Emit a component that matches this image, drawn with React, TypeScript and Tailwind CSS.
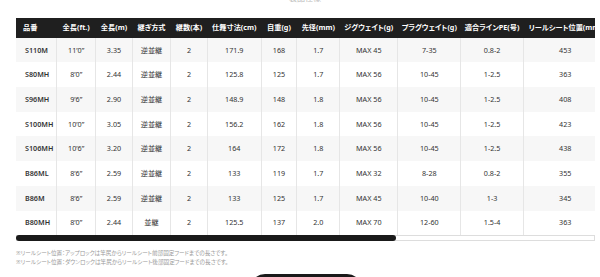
import * as React from "react"

const columns = [
    { label: "品番", width: "w-[40.7px]" },
    { label: "全長(ft.)", width: "w-[39px]" },
    { label: "全長(m)", width: "w-[36.6px]" },
    { label: "継ぎ方式", width: "w-[38.4px]" },
    { label: "継数(本)", width: "w-[36.6px]" },
    { label: "仕舞寸法(cm)", width: "w-[54px]" },
    { label: "自重(g)", width: "w-[35.4px]" },
    { label: "先径(mm)", width: "w-[43.3px]" },
    { label: "ジグウェイト(g)", width: "w-[57.7px]" },
    { label: "プラグウェイト(g)", width: "w-[63.3px]" },
    { label: "適合ラインPE(号)", width: "w-[62.3px]" },
    { label: "リールシート位置(mm)", width: "w-[84px]" },
]

const rows = [
    ["S110M", "11’0”", "3.35", "逆並継", "2", "171.9", "168", "1.7", "MAX 45", "7-35", "0.8-2", "453"],
    ["S80MH", "8’0”", "2.44", "逆並継", "2", "125.8", "125", "1.7", "MAX 56", "10-45", "1-2.5", "363"],
    ["S96MH", "9’6”", "2.90", "逆並継", "2", "148.9", "148", "1.8", "MAX 56", "10-45", "1-2.5", "408"],
    ["S100MH", "10’0”", "3.05", "逆並継", "2", "156.2", "162", "1.8", "MAX 56", "10-45", "1-2.5", "423"],
    ["S106MH", "10’6”", "3.20", "逆並継", "2", "164", "172", "1.8", "MAX 56", "10-45", "1-2.5", "438"],
    ["B86ML", "8’6”", "2.59", "逆並継", "2", "133", "119", "1.7", "MAX 32", "8-28", "0.8-2", "355"],
    ["B86M", "8’6”", "2.59", "逆並継", "2", "133", "125", "1.7", "MAX 45", "10-40", "1-3", "345"],
    ["B80MH", "8’0”", "2.44", "並継", "2", "125.5", "137", "2.0", "MAX 70", "12-60", "1.5-4", "363"],
]

const notes = [
    "※リールシート位置：アップロックは竿尻からリールシート前部固定フードまでの長さです。",
    "※リールシート位置：ダウンロックは竿尻からリールシート後部固定フードまでの長さです。",
]

export default function App() {
    return (
        <div className="h-[277px] w-[600px] overflow-hidden bg-white font-['Noto_Sans','Noto_Sans_CJK_JP',sans-serif] [font-feature-settings:'palt']">
            <div className="flex h-[18px] justify-center overflow-hidden pl-[10px]">
                <p className="-mt-[6px] text-[8px] leading-[8px] text-[#bbbbbb]">製品仕様</p>
            </div>

            <div className="ml-4 w-[579px] overflow-hidden">
                <table className="w-[591.3px] table-fixed border-collapse text-[7.2px] leading-[9px]">
                    <colgroup>
                        {columns.map((col) => (
                            <col key={col.label} className={col.width} />
                        ))}
                    </colgroup>
                    <thead>
                        <tr className="bg-[#1f1f1f] text-white">
                            {columns.map((col, i) => (
                                <th
                                    key={col.label}
                                    className={
                                        i === 0
                                            ? "h-[19.7px] whitespace-nowrap p-0 pl-[7px] text-left font-bold"
                                            : "h-[19.7px] whitespace-nowrap p-0 text-center font-bold"
                                    }
                                >
                                    {col.label}
                                </th>
                            ))}
                        </tr>
                    </thead>
                    <tbody>
                        {rows.map((row, r) => (
                            <tr key={row[0]} className={r % 2 === 0 ? "bg-[#f7f7f7] text-[#333]" : "bg-white text-[#333]"}>
                                {row.map((cell, i) => (
                                    <td
                                        key={i}
                                        className={
                                            i === 0
                                                ? "h-[24.7px] whitespace-nowrap border-r border-[#e6e6e6] p-0 pl-[9px] text-left font-semibold"
                                                : "h-[24.7px] whitespace-nowrap border-r border-[#e6e6e6] p-0 text-center"
                                        }
                                    >
                                        {cell}
                                    </td>
                                ))}
                            </tr>
                        ))}
                    </tbody>
                </table>
            </div>

            {/* scroll bar */}
            <div className="ml-4 flex h-[6px] w-[579px] border border-[#dddddd]">
                <div className="-m-px h-[6px] w-[380px] rounded-full bg-[#1a1a1a]" />
            </div>

            <div className="ml-4 mt-[8px] text-[5.6px] leading-[8.4px] text-[#999999]">
                {notes.map((n) => (
                    <p key={n} className="whitespace-nowrap">{n}</p>
                ))}
            </div>

            <div className="mt-[8px] flex justify-center pl-[12px]">
                <div className="h-[30px] w-[112px] rounded-full bg-[#1a1a1a]" />
            </div>
        </div>
    )
}
